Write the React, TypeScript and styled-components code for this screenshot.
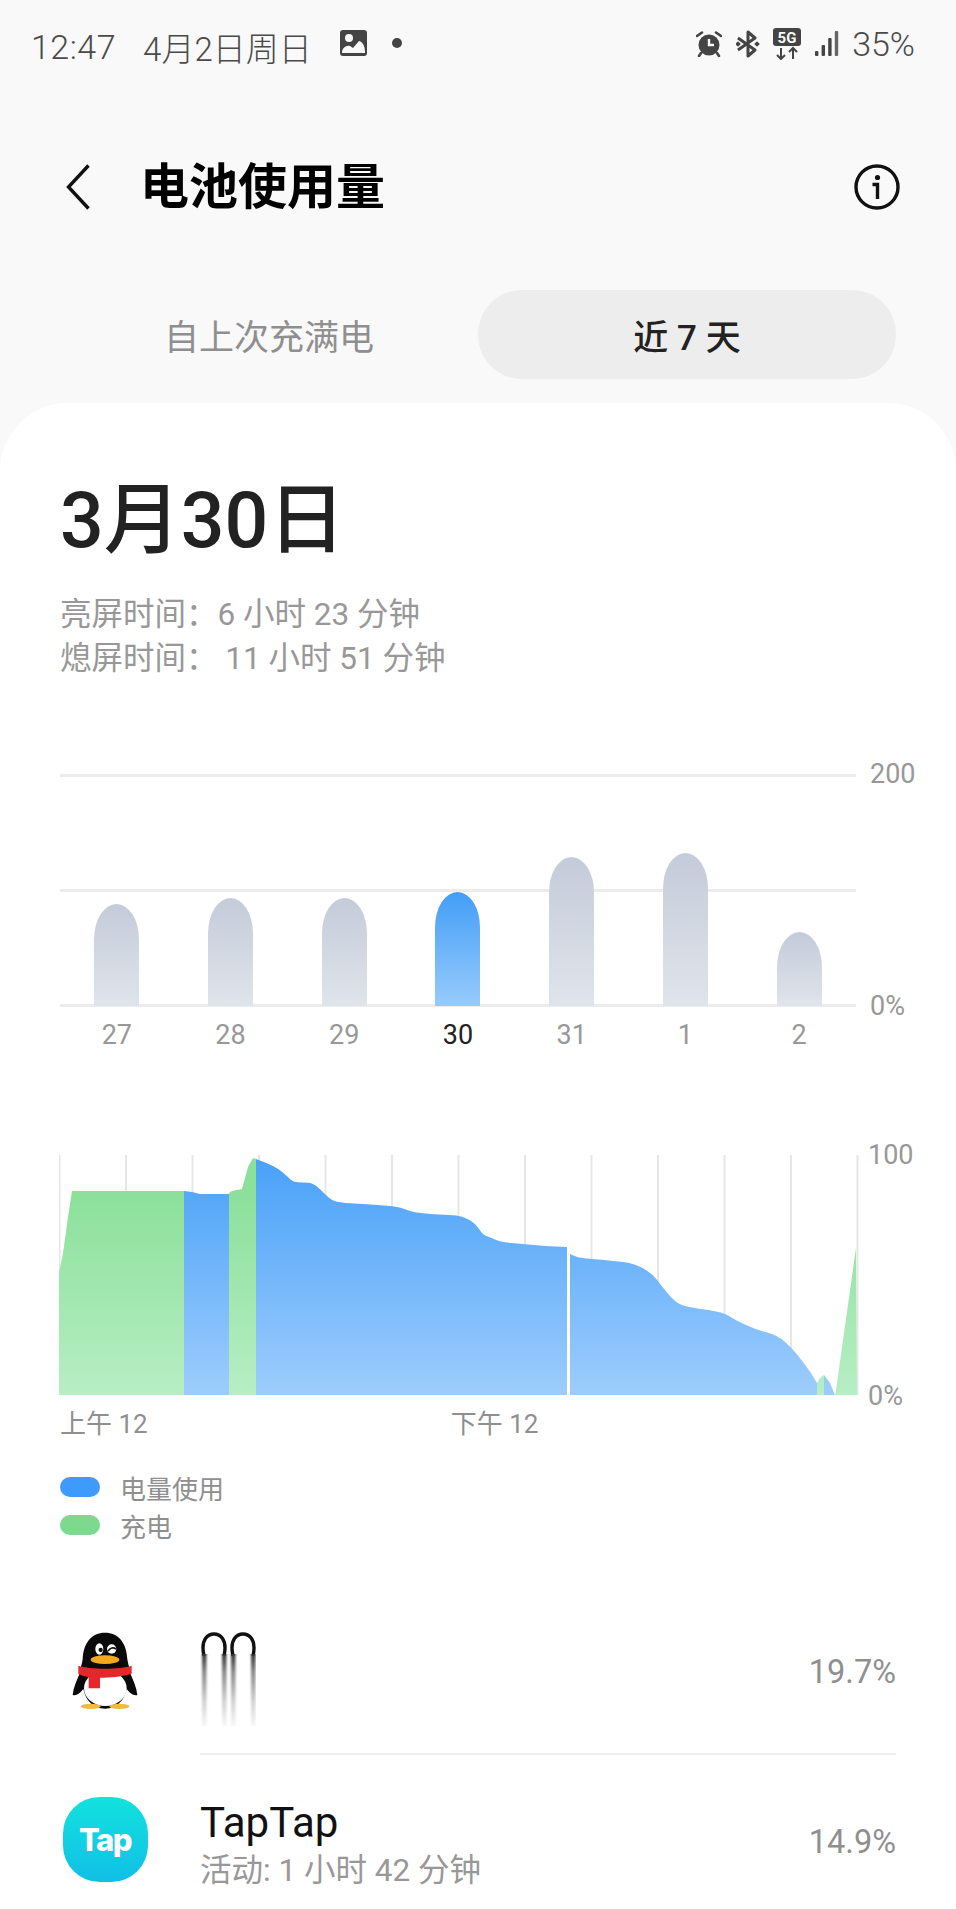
import React from "react";
import styled, { createGlobalStyle } from "styled-components";

const FONT = `Roboto, "Noto Sans CJK SC", sans-serif`;

const GlobalStyle = createGlobalStyle`
  html, body {
    margin: 0;
    padding: 0;
    background: #f9f9f9;
  }
`;

const Page = styled.div`
  width: 956px;
  height: 1909px;
  overflow: hidden;
  background: #f9f9f9;
  font-family: ${FONT};
`;

const StatusBar = styled.div`
  height: 94px;
  padding: 0 41px 0 31px;
  display: flex;
  align-items: center;
  color: #4a4a4a;
  font-size: 33px;
  font-weight: 300;
`;

const StatusTime = styled.span`
  font-size: 34px;
  letter-spacing: 0.5px;
`;

const StatusDate = styled.span`
  margin-left: 27px;
`;

const StatusLeftIcons = styled.div`
  display: flex;
  align-items: center;
  gap: 25px;
  margin-left: 28px;
  padding-bottom: 8px;
`;

const Dot = styled.span`
  width: 10px;
  height: 10px;
  border-radius: 50%;
  background: #444;
`;

const StatusRight = styled.div`
  display: flex;
  align-items: center;
  gap: 13.5px;
  margin-left: auto;
  padding-bottom: 7px;
  font-size: 34px;
`;

const Header = styled.div`
  height: 184px;
  display: flex;
  align-items: center;
  padding: 2px 56px 0 66px;
  box-sizing: border-box;
`;

const Title = styled.h1`
  margin: 0 0 0 50px;
  padding-bottom: 10px;
  font-size: 49px;
  font-weight: 700;
  color: #000;
`;

const InfoIcon = styled.svg`
  margin-left: auto;
`;

const Tabs = styled.div`
  display: flex;
  height: 89px;
  margin: 12px 60px 0;
`;

const Tab = styled.div<{ $active?: boolean }>`
  flex: 1;
  display: flex;
  align-items: center;
  justify-content: center;
  font-size: 35px;
  border-radius: 44px;
  color: ${({ $active }) => ($active ? "#222" : "#8f8f8f")};
  background: ${({ $active }) => ($active ? "#ededed" : "transparent")};
  font-weight: ${({ $active }) => ($active ? 500 : 400)};
`;

const Card = styled.div`
  margin-top: 24px;
  padding: 78px 60px 0;
  background: #fff;
  border-radius: 68px 68px 0 0;
`;

const DateTitle = styled.div`
  font-size: 77px;
  line-height: 80px;
  font-weight: 500;
  color: #222;
`;

const ScreenTimes = styled.div`
  margin-top: 32px;
  font-size: 31.5px;
  line-height: 44px;
  color: #989898;
`;

const ChartRow = styled.div<{ $top: number }>`
  display: flex;
  align-items: flex-start;
  margin: ${({ $top }) => $top}px -60px 0 0;
`;

const BarPlot = styled.div`
  width: 796px;
  height: 233px;
  box-sizing: border-box;
  display: flex;
  align-items: flex-end;
  justify-content: space-around;
  border-top: 3px solid #ececec;
  border-bottom: 3px solid #ececec;
  background: linear-gradient(#ececec, #ececec) center / 100% 3px no-repeat;
`;

const Bar = styled.div<{ $height: number; $selected?: boolean }>`
  width: 45px;
  height: ${({ $height }) => $height}px;
  margin-bottom: -2px;
  border-radius: 23px 23px 0 0 / 36px 36px 0 0;
  background: ${({ $selected }) =>
    $selected ? "linear-gradient(#439ef6, #98cbfc)" : "linear-gradient(#c4cbd9, #e0e4eb)"};
`;

const YAxis = styled.div<{ $height: number; $gap: number }>`
  height: ${({ $height }) => $height}px;
  margin-left: ${({ $gap }) => $gap}px;
  display: flex;
  flex-direction: column;
  justify-content: space-between;
  font-size: 27px;
  line-height: 0;
  color: #989898;
`;

const TickRow = styled.div`
  width: 796px;
  height: 44px;
  margin-top: 6px;
  display: flex;
  justify-content: space-around;
  align-items: center;
`;

const Tick = styled.span<{ $selected?: boolean }>`
  width: 45px;
  text-align: center;
  font-size: 27px;
  color: ${({ $selected }) => ($selected ? "#222" : "#989898")};
`;

const BatterySvg = styled.svg`
  margin-left: -1px;
  display: block;
`;

const HourRow = styled.div`
  height: 44px;
  margin-top: 1px;
  display: flex;
  align-items: center;
  font-size: 26px;
  color: #8f8f8f;
`;

const NoonLabel = styled.span`
  margin-left: 303px;
`;

const Legend = styled.div`
  margin-top: 25px;
  display: flex;
  flex-direction: column;
`;

const LegendRow = styled.div`
  height: 38px;
  display: flex;
  align-items: center;
  gap: 20px;
  font-size: 26px;
  color: #8f8f8f;
`;

const Swatch = styled.span<{ $color: string }>`
  width: 40px;
  height: 20px;
  border-radius: 10px;
  background: ${({ $color }) => $color};
`;

const AppList = styled.div`
  margin: 42px 0 0;
`;

const AppRow = styled.div`
  height: 169px;
  display: flex;
  align-items: center;
`;

const IconSlot = styled.div`
  width: 90px;
  margin-right: 50px;
  flex-shrink: 0;
  display: flex;
  justify-content: center;
`;

const RowBody = styled.div<{ $divider?: boolean }>`
  flex: 1;
  align-self: stretch;
  display: flex;
  align-items: center;
  justify-content: space-between;
  border-bottom: ${({ $divider }) => ($divider ? "2px solid #ececec" : "none")};
`;

const GlitchName = styled.svg`
  align-self: flex-start;
  margin-top: 46px;
`;

const AppText = styled.div`
  align-self: flex-start;
  padding-top: 43px;
`;

const AppName = styled.div`
  font-size: 42px;
  line-height: 50px;
  color: #111;
`;

const AppSub = styled.div`
  margin-top: 1px;
  font-size: 31.5px;
  line-height: 44px;
  color: #989898;
`;

const Percent = styled.span`
  padding-top: 4px;
  font-size: 32.5px;
  color: #8f8f8f;
`;

const TapLogo = styled.div`
  width: 85px;
  height: 85px;
  border-radius: 43%;
  display: flex;
  align-items: center;
  justify-content: center;
  background: linear-gradient(#13e2de, #10bfe6);
  color: #fff;
  font-family: Inter, Roboto, sans-serif;
  font-size: 31px;
  font-weight: 800;
  letter-spacing: -1.5px;
`;

const bars = [
  { day: "27", height: 102 },
  { day: "28", height: 108 },
  { day: "29", height: 108 },
  { day: "30", height: 114, selected: true },
  { day: "31", height: 149 },
  { day: "1", height: 153 },
  { day: "2", height: 74 },
];

const BASE = 1395;
const gridLines = Array.from({ length: 13 }, (_, i) => 59.5 + i * 66.5);

type Pt = [number, number];

// rounds the battery curve through the midpoints, keeps both ends and drops to the baseline
const curveArea = (pts: Pt[]) => {
  const last = pts[pts.length - 1];
  let d = `M${pts[0][0]} ${BASE} L${pts[0][0]} ${pts[0][1]} `;
  for (let i = 1; i < pts.length - 1; i++) {
    const midX = (pts[i][0] + pts[i + 1][0]) / 2;
    const midY = (pts[i][1] + pts[i + 1][1]) / 2;
    d += `Q${pts[i][0]} ${pts[i][1]} ${midX} ${midY} `;
  }
  return d + `L${last[0]} ${last[1]} L${last[0]} ${BASE} Z`;
};

const greenShapes = [
  `M59 ${BASE} L59 1273 L63 1253 L68 1217 L72 1191 L184 1191 L184 ${BASE} Z`,
  `M229 ${BASE} L229 1193 L232 1191 L242 1189 L248 1167 L253 1158 L256 1159 L256 ${BASE} Z`,
  `M817 ${BASE} L817 1383 L820 1378 L824 1375 L824 ${BASE} Z`,
  `M835 ${BASE} L836 1390 L856 1248 L857 ${BASE} Z`,
];

const blueShapes = [
  `M184 ${BASE} L184 1191 L192 1192 L200 1194 L229 1194 L229 ${BASE} Z`,
  curveArea([
    [256, 1159], [267, 1163], [279, 1169], [288, 1177], [293, 1182], [303, 1182.5], [313, 1183], [322, 1191],
    [332, 1201], [345, 1203], [363, 1204], [385, 1205.5], [400, 1207], [412, 1212], [430, 1214], [450, 1215],
    [462, 1216], [475, 1223], [483, 1235], [490, 1237], [500, 1242], [523, 1244], [545, 1246], [567, 1247],
  ]),
  curveArea([
    [570, 1254], [578, 1258], [595, 1259], [613, 1261], [633, 1263], [652, 1273], [663, 1288], [677, 1304],
    [693, 1308], [723, 1312], [735, 1320], [757, 1330], [777, 1335], [792, 1348], [803, 1362], [811, 1373],
    [817, 1383],
  ]),
  `M824 ${BASE} L824 1375 L830 1383 L835 ${BASE} Z`,
];

const ImageIcon = () => (
  <svg width="27" height="26" viewBox="0 0 27 26">
    <rect width="27" height="26" rx="3" fill="#444" />
    <circle cx="9" cy="8" r="4" fill="#f9f9f9" />
    <path d="M2 23 C2 18 6 15 10 16 L13 18 L19 11 C23 12 25 16 25 23 Z" fill="#f9f9f9" />
  </svg>
);

const AlarmIcon = () => (
  <svg width="26" height="26" viewBox="0 0 26 26">
    <circle cx="13" cy="14" r="10.5" fill="#444" />
    <path d="M13 8 V14 H18" fill="none" stroke="#f9f9f9" strokeWidth="2.4" />
    <path d="M1 5 L6 1.5 M25 5 L20 1.5 M5 22 L3 25 M21 22 L23 25" stroke="#444" strokeWidth="2.6" strokeLinecap="round" />
  </svg>
);

const BluetoothIcon = () => (
  <svg width="24" height="28" viewBox="0 0 24 28">
    <path
      d="M2 8 L19 20 L12 26 V2 L19 8 L2 20"
      fill="none"
      stroke="#444"
      strokeWidth="3"
      strokeLinejoin="round"
    />
    <rect x="0" y="12" width="4" height="4" fill="#444" transform="rotate(45 2 14)" />
    <rect x="19" y="12" width="4" height="4" fill="#444" transform="rotate(45 21 14)" />
  </svg>
);

const FiveGIcon = () => (
  <svg width="28" height="32" viewBox="0 0 28 32">
    <rect width="28" height="18" rx="3" fill="#444" />
    <text x="14" y="14.5" textAnchor="middle" fontFamily="Roboto, sans-serif" fontSize="15" fontWeight="700" fill="#f9f9f9">
      5G
    </text>
    <path d="M8 20 V31 M4 27 L8 31 L12 27 M20 31 V20 M16 24 L20 20 L24 24" fill="none" stroke="#444" strokeWidth="2" />
  </svg>
);

const SignalIcon = () => (
  <svg width="24" height="25" viewBox="0 0 24 25">
    <rect x="0" y="20" width="3.4" height="5" rx="1" fill="#444" />
    <rect x="6.6" y="14" width="3.4" height="11" rx="1" fill="#444" />
    <rect x="13.2" y="7" width="3.4" height="18" rx="1" fill="#444" />
    <rect x="19.8" y="0" width="3.4" height="25" rx="1" fill="#666" />
  </svg>
);

const BackIcon = () => (
  <svg width="24" height="46" viewBox="0 0 24 46">
    <path d="M22.5 1.5 L2.5 23 L22.5 44.5" fill="none" stroke="#111" strokeWidth="3.4" />
  </svg>
);

const QQIcon = () => (
  <svg width="90" height="100" viewBox="0 0 270 300">
    <path
      d="M135 35 C95 35 70 65 68 115 C66 130 60 145 58 160 C50 180 40 200 38 222 C50 226 62 214 70 204
         C78 240 100 263 135 263 C170 263 192 240 200 204 C208 214 220 226 232 222 C230 200 220 180 212 160
         C210 145 204 130 202 115 C200 65 175 35 135 35 Z"
      fill="#0a0a0a"
    />
    <ellipse cx="136" cy="202" rx="64" ry="53" fill="#fff" />
    <path d="M55 134 C90 146 180 146 215 134 L215 158 C180 168 150 170 120 170 L120 202 L86 202 L86 168 C72 166 62 162 55 158 Z" fill="#e5262b" />
    <ellipse cx="118" cy="84" rx="12" ry="17" fill="#fff" />
    <circle cx="122" cy="87" r="6.5" fill="#111" />
    <ellipse cx="155" cy="84" rx="14" ry="14" fill="#fff" />
    <path d="M144 90 C150 80 160 78 168 84" fill="none" stroke="#111" strokeWidth="5" />
    <ellipse cx="135" cy="116" rx="43" ry="13" fill="#f4a81c" />
    <ellipse cx="92" cy="256" rx="30" ry="8" fill="#f1bb3c" />
    <ellipse cx="178" cy="256" rx="30" ry="8" fill="#f1bb3c" />
  </svg>
);

const StretchedQQ = () => (
  <GlitchName width="56" height="96" viewBox="0 0 56 96" role="img" aria-label="QQ">
    <defs>
      <linearGradient id="fadeLeg" x1="0" y1="22" x2="0" y2="94" gradientUnits="userSpaceOnUse">
        <stop offset="0" stopColor="#333" />
        <stop offset="0.25" stopColor="#8a8a8a" />
        <stop offset="0.65" stopColor="#d0d0d0" />
        <stop offset="1" stopColor="#f8f8f8" />
      </linearGradient>
      <filter id="softLeg" x="-100%" y="0" width="300%" height="100%">
        <feGaussianBlur stdDeviation="0.9 0" />
      </filter>
    </defs>
    <path d="M4 24 C0 6 9 2 14 2 C19 2 28 6 24 24" fill="none" stroke="#111" strokeWidth="3.4" />
    <path d="M33 24 C29 6 38 2 43 2 C48 2 57 6 53 24" fill="none" stroke="#111" strokeWidth="3.4" />
    {[4, 24, 33, 53].map((x) => (
      <rect key={x} x={x - 2} y="22" width="4.5" height="72" fill="url(#fadeLeg)" filter="url(#softLeg)" />
    ))}
  </GlitchName>
);

const BatteryChart = () => (
  <BatterySvg width="800" height="243" viewBox="59 1155 800 243">
    <defs>
      <linearGradient id="blueFill" x1="0" y1="1165" x2="0" y2="1396" gradientUnits="userSpaceOnUse">
        <stop offset="0" stopColor="#4ba2f8" />
        <stop offset="1" stopColor="#9ecdfc" />
      </linearGradient>
      <linearGradient id="greenFill" x1="0" y1="1190" x2="0" y2="1396" gradientUnits="userSpaceOnUse">
        <stop offset="0" stopColor="#8be09a" />
        <stop offset="1" stopColor="#b7eec4" />
      </linearGradient>
    </defs>
    {gridLines.map((x) => (
      <line key={x} x1={x} x2={x} y1="1155" y2={BASE} stroke="#e6e6e6" strokeWidth="2" />
    ))}
    {blueShapes.map((d, i) => (
      <path key={i} d={d} fill="url(#blueFill)" />
    ))}
    {greenShapes.map((d, i) => (
      <path key={i} d={d} fill="url(#greenFill)" />
    ))}
  </BatterySvg>
);

const App = () => {
  return (
    <Page>
      <GlobalStyle />
      <StatusBar>
        <StatusTime>12:47</StatusTime>
        <StatusDate>4月2日周日</StatusDate>
        <StatusLeftIcons>
          <ImageIcon />
          <Dot />
        </StatusLeftIcons>
        <StatusRight>
          <AlarmIcon />
          <BluetoothIcon />
          <FiveGIcon />
          <SignalIcon />
          <span>35%</span>
        </StatusRight>
      </StatusBar>

      <Header>
        <BackIcon />
        <Title>电池使用量</Title>
        <InfoIcon width="46" height="46" viewBox="0 0 46 46">
          <circle cx="23" cy="23" r="21" fill="none" stroke="#111" strokeWidth="3.4" />
          <circle cx="23.5" cy="13.5" r="2.6" fill="#111" />
          <path d="M18.5 20.5 H23.5 V35" fill="none" stroke="#111" strokeWidth="3.4" />
        </InfoIcon>
      </Header>

      <Tabs>
        <Tab>自上次充满电</Tab>
        <Tab $active>近 7 天</Tab>
      </Tabs>

      <Card>
        <DateTitle>3月30日</DateTitle>
        <ScreenTimes>
          <div>亮屏时间：6 小时 23 分钟</div>
          <div>熄屏时间： 11 小时 51 分钟</div>
        </ScreenTimes>

        <ChartRow $top={93}>
          <BarPlot>
            {bars.map((b) => (
              <Bar key={b.day} $height={b.height} $selected={b.selected} />
            ))}
          </BarPlot>
          <YAxis $height={232} $gap={14}>
            <span>200</span>
            <span>0%</span>
          </YAxis>
        </ChartRow>
        <TickRow>
          {bars.map((b) => (
            <Tick key={b.day} $selected={b.selected}>
              {b.day}
            </Tick>
          ))}
        </TickRow>

        <ChartRow $top={98}>
          <BatteryChart />
          <YAxis $height={241} $gap={9}>
            <span>100</span>
            <span>0%</span>
          </YAxis>
        </ChartRow>
        <HourRow>
          <span>上午 12</span>
          <NoonLabel>下午 12</NoonLabel>
        </HourRow>

        <Legend>
          <LegendRow>
            <Swatch $color="#3f9bfb" />
            电量使用
          </LegendRow>
          <LegendRow>
            <Swatch $color="#7dd98d" />
            充电
          </LegendRow>
        </Legend>

        <AppList>
          <AppRow>
            <IconSlot>
              <QQIcon />
            </IconSlot>
            <RowBody $divider>
              <StretchedQQ />
              <Percent>19.7%</Percent>
            </RowBody>
          </AppRow>
          <AppRow>
            <IconSlot>
              <TapLogo>Tap</TapLogo>
            </IconSlot>
            <RowBody>
              <AppText>
                <AppName>TapTap</AppName>
                <AppSub>活动: 1 小时 42 分钟</AppSub>
              </AppText>
              <Percent>14.9%</Percent>
            </RowBody>
          </AppRow>
        </AppList>
      </Card>
    </Page>
  );
};

export default App;
